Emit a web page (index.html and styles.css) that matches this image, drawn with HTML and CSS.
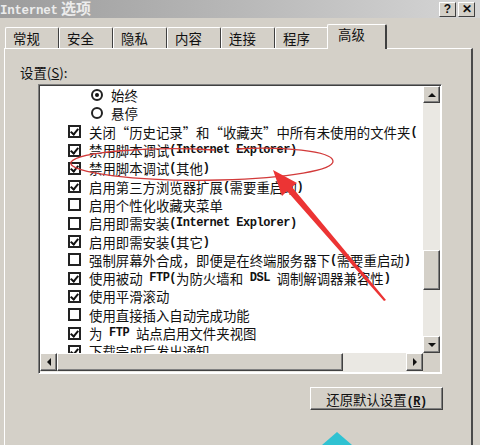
FILE: index.html
```html
<!DOCTYPE html>
<html lang="zh-CN">
<head>
  <meta charset="UTF-8">
  <title>Internet 选项</title>
  <link rel="stylesheet" href="styles.css">
</head>
<body>
  <div class="window">
    <div class="titlebar">
      <div class="title"><span class="title-en">Internet</span> 选项</div>
      <div class="title-buttons">
        <div class="tbtn">?</div>
        <div class="tbtn close">✕</div>
      </div>
    </div>

    <div class="tabstrip">
      <div class="tab">常规</div>
      <div class="tab">安全</div>
      <div class="tab">隐私</div>
      <div class="tab">内容</div>
      <div class="tab">连接</div>
      <div class="tab">程序</div>
      <div class="tab active">高级</div>
    </div>

    <div class="panel">
      <div class="label">设置(<u>S</u>):</div>

      <div class="listbox">
        <div class="list">
          <div class="row radio-row"><span class="radio on"></span>始终</div>
          <div class="row radio-row"><span class="radio"></span>悬停</div>
          <div class="row"><span class="check on"></span>关闭“历史记录”和“收藏夹”中所有未使用的文件夹<span class="en">(</span></div>
          <div class="row"><span class="check on"></span>禁用脚本调试<span class="en">(Internet Explorer)</span></div>
          <div class="row"><span class="check on"></span>禁用脚本调试<span class="en">(</span>其他<span class="en">)</span></div>
          <div class="row"><span class="check on"></span>启用第三方浏览器扩展<span class="en">(</span>需要重启动<span class="en">)</span></div>
          <div class="row"><span class="check"></span>启用个性化收藏夹菜单</div>
          <div class="row"><span class="check"></span>启用即需安装<span class="en">(Internet Explorer)</span></div>
          <div class="row"><span class="check on"></span>启用即需安装<span class="en">(</span>其它<span class="en">)</span></div>
          <div class="row"><span class="check"></span>强制屏幕外合成，即便是在终端服务器下<span class="en">(</span>需要重启动<span class="en">)</span></div>
          <div class="row"><span class="check on"></span>使用被动<span class="en"> FTP(</span>为防火墙和<span class="en"> DSL </span>调制解调器兼容性<span class="en">)</span></div>
          <div class="row"><span class="check on"></span>使用平滑滚动</div>
          <div class="row"><span class="check"></span>使用直接插入自动完成功能</div>
          <div class="row"><span class="check on"></span>为<span class="en"> FTP </span>站点启用文件夹视图</div>
          <div class="row"><span class="check on"></span>下载完成后发出通知</div>
        </div>

        <div class="vscroll">
          <div class="sbtn"><span class="arrow up"></span></div>
          <div class="vtrack"><div class="vthumb"></div></div>
          <div class="sbtn"><span class="arrow down"></span></div>
        </div>

        <div class="hscroll">
          <div class="sbtn"><span class="arrow left"></span></div>
          <div class="hthumb"></div>
          <div class="htrack"></div>
          <div class="sbtn"><span class="arrow right"></span></div>
        </div>

        <div class="corner"></div>
      </div>

      <div class="actions">
        <button class="restore">还原默认设置<span class="en">(<u>R</u>)</span></button>
      </div>
    </div>

    <!-- red marker drawn over the screenshot -->
    <svg class="marks" width="480" height="445" viewBox="0 0 480 445">
      <path d="M214 150 C 150 146, 78 152, 71 162 C 66 173, 140 182, 220 180 C 290 178, 334 170, 333 161 C 332 151, 282 146, 236 149"
            fill="none" stroke="#d23a3a" stroke-width="1.3"/>
      <polygon points="273,170 297,183 292,187 386,300 384,301 287,191 282,196" fill="#ec3434"/>
      <polygon points="322,445 337,432 352,445" fill="#2fc2d2"/>
    </svg>
  </div>
</body>
</html>
```

FILE: styles.css
```css
body {
  margin: 0;
  padding: 0;
  background: #d4d0c8;
}

.window {
  position: relative;
  width: 480px;
  height: 445px;
  overflow: hidden;
  background: #d4d0c8;
  font-family: "Noto Sans CJK SC", sans-serif;
  font-size: 13.4px;
  color: #111;
}

.en {
  font-family: "Liberation Mono", "Noto Sans CJK SC", monospace;
  font-size: 12px;
  font-weight: bold;
  letter-spacing: -0.5px;
  white-space: pre;
}

/* title bar */
.titlebar {
  height: 18px;
  display: flex;
  justify-content: space-between;
  align-items: center;
  background: linear-gradient(to right, #9c9c9c, #b8b8b8 50%, #d6d6d6);
}

.title {
  color: #ececec;
  font-size: 15px;
  line-height: 18px;
  font-weight: bold;
  white-space: pre;
}

.title-en {
  font-family: "Liberation Mono", monospace;
  font-size: 12.5px;
  letter-spacing: -0.3px;
}

.title-buttons {
  display: flex;
  gap: 2px;
  margin-right: 5px;
}

.tbtn {
  width: 15px;
  height: 13px;
  background: #d4d0c8;
  border: 1px solid;
  border-color: #fff #404040 #404040 #fff;
  font-family: "Liberation Sans", sans-serif;
  font-size: 12px;
  font-weight: bold;
  line-height: 13px;
  text-align: center;
  color: #111;
}

/* tabs */
.tabstrip {
  height: 30px;
  display: flex;
  align-items: flex-end;
  padding-left: 5px;
}

.tab {
  box-sizing: border-box;
  width: 54px;
  height: 21px;
  padding-left: 7px;
  line-height: 20px;
  border-top: 1px solid #fff;
  border-left: 1px solid #fff;
  border-right: 1px solid #404040;
  border-radius: 2px 2px 0 0;
}

.tab.active {
  position: relative;
  z-index: 1;
  width: 60px;
  height: 25px;
  margin: 0 0 -1px -2px;
  padding-left: 10px;
  line-height: 19px;
  background: #d4d0c8;
  border-right-width: 2px;
}

/* panel */
.panel {
  margin-left: 4px;
  width: 466px;
  height: 400px;
  border-top: 1px solid #fff;
  border-left: 1px solid #fff;
  border-right: 2px solid #4a4a4a;
}

.label {
  margin: 14px 0 0 15px;
  line-height: 18px;
}

.listbox {
  box-sizing: border-box;
  margin: 3px 0 0 33px;
  width: 404px;
  height: 290px;
  border: 1px solid;
  border-color: #808080 #fff #fff #808080;
  box-shadow: inset 1px 1px #404040;
  padding: 1px 0 0 1px;
  display: grid;
  grid-template-columns: 383px 17px;
  grid-template-rows: 267px 19px;
  background: #fff;
}

.list {
  overflow: hidden;
  background: #fff;
}

.row {
  height: 18.3px;
  display: flex;
  align-items: center;
  padding-left: 28px;
  white-space: nowrap;
}

.row.radio-row {
  padding-left: 51px;
}

.check {
  box-sizing: border-box;
  flex: none;
  width: 13px;
  height: 13px;
  margin-right: 8px;
  border: 2px solid #222;
  background: #fff;
  position: relative;
}

.check.on::after {
  content: "";
  position: absolute;
  left: 2px;
  top: 0;
  width: 3px;
  height: 6px;
  border: solid #111;
  border-width: 0 2px 2px 0;
  transform: rotate(40deg);
}

.radio {
  box-sizing: border-box;
  flex: none;
  width: 12px;
  height: 12px;
  margin-right: 8px;
  border: 2px solid #222;
  border-radius: 50%;
  position: relative;
}

.radio.on::after {
  content: "";
  position: absolute;
  left: 2px;
  top: 2px;
  width: 4px;
  height: 4px;
  border-radius: 50%;
  background: #111;
}

/* scroll bars */
.sbtn {
  box-sizing: border-box;
  flex: none;
  width: 17px;
  height: 17px;
  background: #d4d0c8;
  border: 1px solid;
  border-color: #fff #404040 #404040 #fff;
  box-shadow: inset -1px -1px #808080;
  display: flex;
  justify-content: center;
  align-items: center;
}

.vthumb {
  box-sizing: border-box;
  height: 40px;
  margin-top: 147px;
  background: #d4d0c8;
  border: 1px solid;
  border-color: #fff #404040 #404040 #fff;
  box-shadow: inset -1px -1px #808080;
}

.vscroll {
  display: flex;
  flex-direction: column;
  background: #eae8e3;
}

.vtrack {
  flex: 1;
  background: #eae8e3;
}

.hscroll {
  display: flex;
  align-items: flex-start;
  background: #eae8e3;
}

.hscroll .sbtn {
  height: 18px;
}

.hthumb {
  box-sizing: border-box;
  width: 286px;
  height: 18px;
  background: #d4d0c8;
  border: 1px solid;
  border-color: #fff #404040 #404040 #fff;
  box-shadow: inset -1px -1px #808080;
}

.htrack {
  flex: 1;
}

.corner {
  background: #d4d0c8;
}

.arrow {
  width: 0;
  height: 0;
  border: 4px solid transparent;
}

.arrow.up {
  border-bottom-color: #111;
  border-top-width: 0;
}

.arrow.down {
  border-top-color: #111;
  border-bottom-width: 0;
}

.arrow.left {
  border-right-color: #111;
  border-left-width: 0;
}

.arrow.right {
  border-left-color: #111;
  border-right-width: 0;
}

/* bottom button */
.actions {
  width: 405px;
  margin: 13px 0 0 33px;
  display: flex;
  justify-content: flex-end;
}

.restore {
  width: 133px;
  height: 23px;
  padding: 0;
  font-family: inherit;
  font-size: 13.4px;
  color: #111;
  background: #d4d0c8;
  border: 1px solid;
  border-color: #fff #404040 #404040 #fff;
  box-shadow: inset -1px -1px #808080;
}

.marks {
  position: absolute;
  left: 0;
  top: 0;
  pointer-events: none;
}
```
